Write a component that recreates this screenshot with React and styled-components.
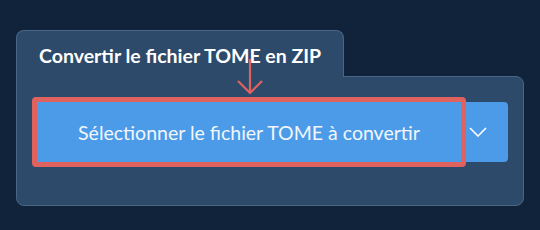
import styled, { createGlobalStyle } from 'styled-components'

const GlobalStyle = createGlobalStyle`
  html, body {
    margin: 0;
    padding: 0;
    background: #10233a;
    font-family: Lato, "Noto Sans", sans-serif;
  }
`

export default function App() {
  return (
    <Page>
      <GlobalStyle />
      <Card>
        <Tab>
          <Title>Convertir le fichier TOME en ZIP</Title>
        </Tab>
        <Panel>
          <Arrow width="28" height="36" viewBox="0 0 28 36">
            <path d="M14 0 V34 M2 22 L14 34 L26 22" fill="none" stroke="#e0625e" strokeWidth="2.2" />
          </Arrow>
          <ButtonRow>
            <Highlight>
              <MainButton>Sélectionner le fichier TOME à convertir</MainButton>
            </Highlight>
            <DropButton aria-label="Plus d'options">
              <svg width="18" height="10" viewBox="0 0 18 10">
                <path d="M1 1 L9 9 L17 1" fill="none" stroke="#ffffff" strokeWidth="1.6" />
              </svg>
            </DropButton>
          </ButtonRow>
        </Panel>
      </Card>
    </Page>
  )
}

const Page = styled.div`
  padding: 30px 16px 0 16px;
  width: 540px;
  box-sizing: border-box;
`

const Card = styled.div`
  display: flex;
  flex-direction: column;
  width: 508px;
`

const Tab = styled.div`
  align-self: flex-start;
  width: 328px;
  height: 47px;
  box-sizing: border-box;
  background: #2d4a6a;
  border: 1px solid #4a6686;
  border-bottom: none;
  border-radius: 8px 8px 0 0;
  padding: 14px 0 0 22px;
  margin-bottom: -1px;
  position: relative;
  z-index: 1;
`

const Title = styled.div`
  color: #ffffff;
  font-weight: 700;
  font-size: 19.5px;
  line-height: 22px;
  white-space: nowrap;
`

const Panel = styled.div`
  position: relative;
  background: #2d4a6a;
  border: 1px solid #4a6686;
  border-radius: 0 8px 8px 8px;
  padding: 20px 15px 38px 15px;
`

const Arrow = styled.svg`
  position: absolute;
  left: 219px;
  top: -18px;
  z-index: 2;
`

const ButtonRow = styled.div`
  display: flex;
  align-items: center;
`

const Highlight = styled.div`
  border: 5px solid #e0625e;
  border-radius: 4px;
  width: 434px;
  height: 70px;
  box-sizing: border-box;
  display: flex;
`

const MainButton = styled.button`
  flex: 1;
  border: none;
  background: #4c9be8;
  color: #f2f6fb;
  font-family: Lato, "Noto Sans", sans-serif;
  font-size: 19.5px;
  padding: 0;
  cursor: pointer;
  white-space: nowrap;
`

const DropButton = styled.button`
  width: 42px;
  height: 60px;
  border: none;
  background: #4c9be8;
  border-radius: 0 4px 4px 0;
  display: flex;
  align-items: center;
  justify-content: flex-start;
  padding: 0 0 0 3px;
  cursor: pointer;
`
